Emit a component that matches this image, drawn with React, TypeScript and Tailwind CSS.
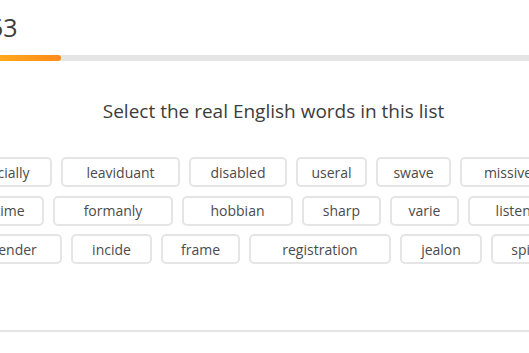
const rows: { offset: number; chips: { word: string; w: number }[] }[] = [
  {
    offset: -56,
    chips: [
      { word: 'especially', w: 108 },
      { word: 'leaviduant', w: 119 },
      { word: 'disabled', w: 98 },
      { word: 'useral', w: 71 },
      { word: 'swave', w: 75 },
      { word: 'missive', w: 96 },
    ],
  },
  {
    offset: -47,
    chips: [
      { word: 'pastime', w: 91 },
      { word: 'formanly', w: 120 },
      { word: 'hobbian', w: 111 },
      { word: 'sharp', w: 79 },
      { word: 'varie', w: 69 },
      { word: 'listener', w: 104 },
    ],
  },
  {
    offset: -32,
    chips: [
      { word: 'tender', w: 94 },
      { word: 'incide', w: 81 },
      { word: 'frame', w: 79 },
      { word: 'registration', w: 142 },
      { word: 'jealon', w: 82 },
      { word: 'spilt', w: 68 },
    ],
  },
]

export default function App() {
  return (
    <div className="w-[529px] h-[353px] overflow-hidden bg-white font-['Open_Sans',sans-serif] text-[#4b4b4b]">
      {/* timer */}
      <div className="h-[55px] pt-[13px]">
        <span className="block ml-[-11px] text-[25px] leading-[28px] text-[#3c3c3c]">53</span>
      </div>

      {/* progress */}
      <div className="h-[6px] w-full bg-[#e5e5e5]">
        <div className="h-full w-[61px] rounded-r-full bg-gradient-to-r from-[#ffa81d] to-[#ff8b1a]" />
      </div>

      {/* prompt */}
      <h1 className="mt-[38px] pl-[18px] text-center text-[19px] leading-[24px] text-[#3c3c3c]">
        Select the real English words in this list
      </h1>

      {/* word chips */}
      <div className="mt-[34px] flex flex-col gap-[8.5px]">
        {rows.map((row, i) => (
          <div key={i} className="flex gap-[9px] whitespace-nowrap" style={{ marginLeft: row.offset }}>
            {row.chips.map((c) => (
              <div
                key={c.word}
                className="h-[30px] shrink-0 rounded-[5px] border-2 border-[#e5e5e5] flex items-center justify-center text-[14px] text-[#4b4b4b]"
                style={{ width: c.w }}
              >
                {c.word}
              </div>
            ))}
          </div>
        ))}
      </div>

      <div className="mt-[66px] h-[2px] w-full bg-[#e5e5e5]" />
    </div>
  )
}
